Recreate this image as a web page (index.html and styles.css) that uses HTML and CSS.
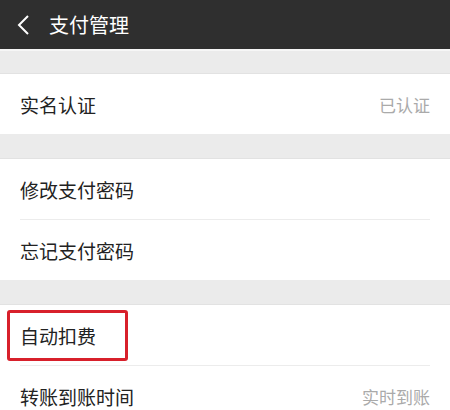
FILE: index.html
```html
<!DOCTYPE html>
<html lang="zh-CN">
<head>
    <meta charset="UTF-8">
    <meta name="viewport" content="width=device-width, initial-scale=1.0">
    <title>支付管理</title>
    <link rel="stylesheet" href="styles.css">
</head>
<body>

<div class="header">
    <svg class="back" width="14" height="22" viewBox="0 0 14 22">
        <path d="M12 2 L3 11 L12 20" fill="none" stroke="#fff" stroke-width="2"/>
    </svg>
    <span class="title">支付管理</span>
</div>

<div class="group">
    <div class="row">
        <span class="label">实名认证</span>
        <span class="value">已认证</span>
    </div>
</div>

<div class="group">
    <div class="row">
        <span class="label">修改支付密码</span>
    </div>
    <div class="row">
        <span class="label">忘记支付密码</span>
    </div>
</div>

<div class="group">
    <div class="row">
        <span class="label marked">自动扣费</span>
    </div>
    <div class="row">
        <span class="label">转账到账时间</span>
        <span class="value">实时到账</span>
    </div>
</div>

</body>
</html>
```

FILE: styles.css
```css
body {
    margin: 0;
    background: #ebebeb;
    font-family: "Noto Sans CJK SC", "Noto Sans", sans-serif;
    color: #222;
}
.header {
    height: 49px;
    background: #2f2f2f;
    border-bottom: 2px solid #f6f6f6;
    display: flex;
    align-items: center;
    padding-left: 16px;
    color: #fff;
}
.back {
    margin-right: 19px;
}
.title {
    font-size: 20px;
}
.group {
    background: #fff;
    margin-top: 24px;
    border-top: 1px solid #e2e2e2;
}
.header + .group {
    margin-top: 22px;
}
.row {
    height: 60px;
    display: flex;
    align-items: center;
    justify-content: space-between;
    margin: 0 20px;
}
.row + .row {
    border-top: 1px solid #ececec;
}
.label {
    font-size: 19px;
}
.value {
    font-size: 17px;
    color: #aaa;
}
.marked {
    margin-left: -13px;
    padding: 9px 29px 9px 10px;
    border: 3px solid #d8202b;
    border-radius: 3px;
}
```
